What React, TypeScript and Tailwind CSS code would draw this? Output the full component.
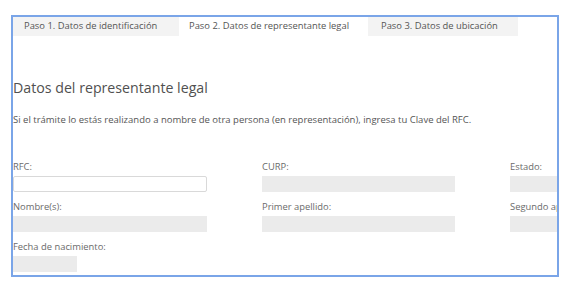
import React from "react"

const TABS = [
  { label: "Paso 1. Datos de identificación", w: "w-[166px]", active: false, pad: "pl-[11px]" },
  { label: "Paso 2. Datos de representante legal", w: "w-[189px]", active: true, pad: "pl-[10px]" },
  { label: "Paso 3. Datos de ubicación", w: "w-[150px]", active: false, pad: "pl-[13px]" },
]

function Field({ label, disabled = true, width }: { label: string; disabled?: boolean; width: string }) {
  return (
    <div className="flex flex-col">
      <span className="text-[9.4px] leading-[12px] text-[#6b6b6b] whitespace-nowrap">{label}</span>
      <div
        className={
          disabled
            ? `${width} h-[16px] mt-[3px] bg-[#ebebeb]`
            : `${width} h-[16px] mt-[3px] bg-white border border-[#d9d9d9] rounded-[2px]`
        }
      />
    </div>
  )
}

export default function App() {
  return (
    <div
      className="w-[566px] h-[282px] bg-white pt-[15px] pl-[11px]"
      style={{ fontFamily: '"Open Sans", "Liberation Sans", sans-serif' }}
    >
      <div className="w-[548px] h-[262px] border-2 border-[#7aa5e8] overflow-hidden">
        <div className="flex h-[19px]">
          {TABS.map((t) => (
            <div
              key={t.label}
              className={`${t.w} ${t.pad} flex items-center text-[9.4px] text-[#555] whitespace-nowrap ${
                t.active ? "bg-white" : "bg-[#f3f3f3]"
              }`}
            >
              {t.label}
            </div>
          ))}
        </div>

        <h1 className="mt-[42px] text-[14.2px] leading-[20px] text-[#505050]">
          Datos del representante legal
        </h1>
        <p className="mt-[16px] text-[9.5px] leading-[12px] text-[#555] whitespace-nowrap">
          Si el trámite lo estás realizando a nombre de otra persona (en representación), ingresa tu Clave del RFC.
        </p>

        <div className="mt-[35px] grid grid-cols-[249px_248px_248px] w-[745px] gap-y-[9px]">
          <Field label="RFC:" disabled={false} width="w-[194px]" />
          <Field label="CURP:" width="w-[193px]" />
          <Field label="Estado:" width="w-[193px]" />
          <Field label="Nombre(s):" width="w-[194px]" />
          <Field label="Primer apellido:" width="w-[193px]" />
          <Field label="Segundo apellido:" width="w-[193px]" />
          <Field label="Fecha de nacimiento:" width="w-[64px]" />
        </div>
      </div>
    </div>
  )
}
